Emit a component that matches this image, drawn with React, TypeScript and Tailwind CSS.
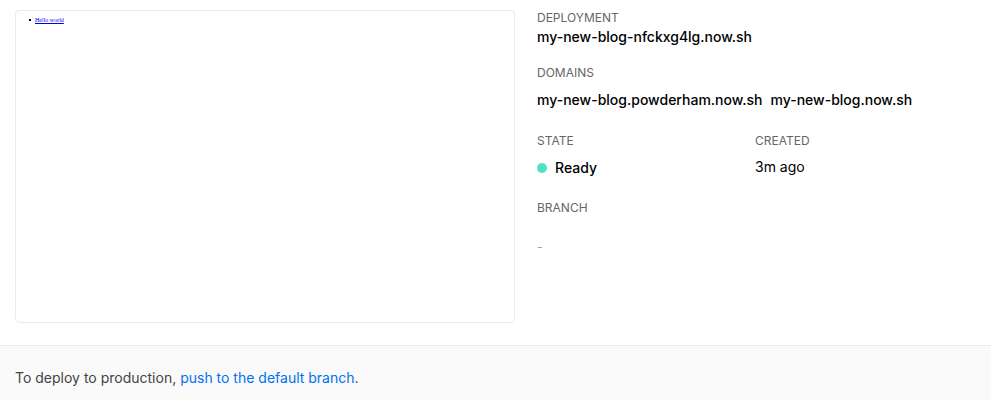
import React from "react";

const label = "text-xs leading-4 uppercase text-[#666]";
const strong = "text-sm leading-5 font-medium text-black";

export default function App() {
  return (
    <main className="min-h-screen flex flex-col bg-white font-['Inter','Liberation_Sans',sans-serif]">
      <section className="flex gap-[22px] pl-[15px] pr-[18px] pt-[10px] pb-[22px]">
        <div className="basis-[500px] shrink-0 aspect-[500/313] rounded border border-[#eaeaea] bg-white">
          <ul className="pl-[13px] pt-[5px] font-['Liberation_Serif',serif] text-[6px] leading-2">
            <li className="flex items-center gap-1">
              <span className="size-[2px] bg-black" />
              <a href="#hello" className="underline text-[#0000ee]">Hello world</a>
            </li>
          </ul>
        </div>
        <dl className="flex-1 min-w-0">
          <div>
            <dt className={label}>Deployment</dt>
            <dd className={`${strong} mt-px`}>
              <a href="#deployment">my-new-blog-nfckxg4lg.now.sh</a>
            </dd>
          </div>
          <div className="mt-[18px]">
            <dt className={label}>Domains</dt>
            <dd className={`${strong} mt-[9px] flex flex-wrap gap-x-2`}>
              <a href="#branch-domain">my-new-blog.powderham.now.sh</a>
              <a href="#domain">my-new-blog.now.sh</a>
            </dd>
          </div>
          <div className="grid grid-cols-2 mt-[23px]">
            <div>
              <dt className={label}>State</dt>
              <dd className={`${strong} mt-[9px] flex items-center gap-2`}>
                <span className="size-[10px] rounded-full bg-[#50e3c2]" />
                Ready
              </dd>
            </div>
            <div>
              <dt className={label}>Created</dt>
              <dd className="mt-2 text-sm leading-5 text-black">3m ago</dd>
            </div>
          </div>
          <div className="mt-[22px]">
            <dt className={label}>Branch</dt>
            <dd className="mt-[23px] text-xs leading-4 text-[#999]">-</dd>
          </div>
        </dl>
      </section>
      <footer className="flex-1 border-t border-[#eaeaea] bg-[#fafafa] px-[15px] pt-[22px] text-sm leading-5 text-[#444]">
        To deploy to production,{" "}
        <a href="#push" className="text-[#0070f3]">push to the default branch</a>.
      </footer>
    </main>
  );
}
